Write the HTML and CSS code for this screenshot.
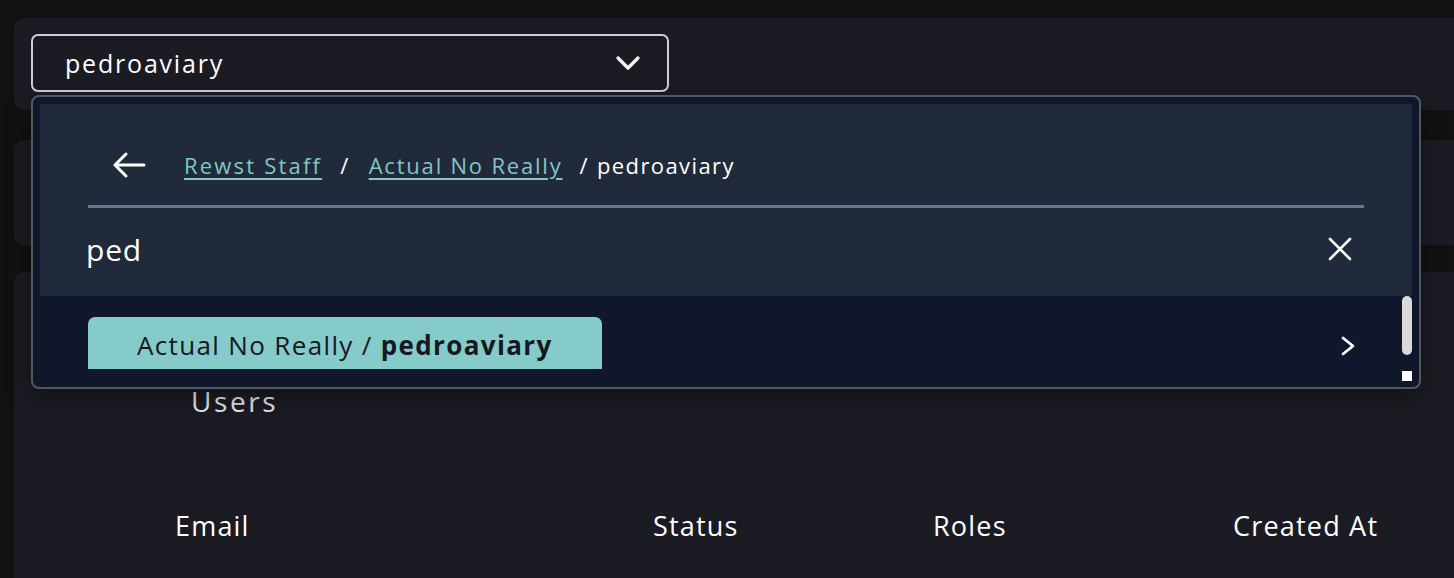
FILE: index.html
```html
<!DOCTYPE html>
<html lang="en">
<head>
<meta charset="utf-8">
<title>Organization picker</title>
<link rel="stylesheet" href="styles.css">
</head>
<body>
<div class="page">
  <section class="card card-top">
    <div class="select">
      <span class="select-value">pedroaviary</span>
      <svg class="select-chevron" width="26" height="16" viewBox="0 0 26 16"><path d="M3 3 L13 13 L23 3" fill="none" stroke="#fff" stroke-width="3.2" stroke-linecap="round" stroke-linejoin="round"/></svg>
    </div>
  </section>
  <section class="card card-mid"></section>
  <section class="card card-main">
    <h2 class="users-title">Users</h2>
    <div class="table-head">
      <span class="th th-email">Email</span>
      <span class="th th-status">Status</span>
      <span class="th th-roles">Roles</span>
      <span class="th th-created">Created At</span>
    </div>
  </section>

  <div class="dropdown">
    <div class="dd-header">
      <div class="crumbs">
        <svg class="back" width="34" height="28" viewBox="0 0 34 28"><path d="M32 14 H3 M14 3 L3 14 L14 25" fill="none" stroke="#fff" stroke-width="3" stroke-linecap="round" stroke-linejoin="round"/></svg>
        <a class="crumb-link crumb-link-wide">Rewst Staff</a>
        <span class="crumb-sep">/</span>
        <a class="crumb-link">Actual No Really</a>
        <span class="crumb-sep crumb-sep-last">/</span>
        <span class="crumb-current">pedroaviary</span>
      </div>
      <div class="divider"></div>
      <div class="search">
        <span class="search-text">ped</span>
        <svg class="clear" width="24" height="24" viewBox="0 0 24 24"><path d="M2 2 L22 22 M22 2 L2 22" fill="none" stroke="#fff" stroke-width="2.6" stroke-linecap="round"/></svg>
      </div>
    </div>
    <div class="dd-body">
      <div class="results">
        <div class="result-row">
          <div class="result-pill">Actual No Really / <b>pedroaviary</b></div>
          <svg class="result-chevron" width="18" height="24" viewBox="0 0 18 24"><path d="M4 4 L14 12 L4 20" fill="none" stroke="#fff" stroke-width="2.8" stroke-linecap="round" stroke-linejoin="round"/></svg>
        </div>
      </div>
      <div class="vbar">
        <div class="thumb"></div>
        <div class="corner"></div>
      </div>
    </div>
  </div>
</div>
</body>
</html>
```

FILE: styles.css
```css
* { box-sizing: border-box; }
html, body { margin: 0; padding: 0; }
body {
  background: #111111;
  width: 1454px;
  height: 578px;
  overflow: hidden;
  font-family: "Open Sans", "Noto Sans", sans-serif;
  color: #ffffff;
}
.page {
  position: relative;
  padding: 18px 0 0 14px;
  display: flex;
  flex-direction: column;
}
.card {
  width: 1460px;
  background: #1b1b23;
  border-radius: 10px;
}
.card-top {
  height: 92px;
  padding: 16px 0 0 17px;
}
.card-mid {
  height: 105px;
  margin-top: 30px;
}
.card-main {
  margin-top: 27px;
  height: 320px;
  padding-top: 112px;
}
.select {
  width: 638px;
  height: 58px;
  border: 2px solid #ccd0da;
  border-radius: 7px;
  display: flex;
  align-items: center;
  justify-content: space-between;
  padding: 0 26px 0 32px;
}
.select-value {
  font-size: 25px;
  letter-spacing: 1.8px;
}
.select-chevron { display: block; }

.users-title {
  margin: 0 0 0 177px;
  font-size: 28px;
  font-weight: 400;
  color: #e4e4e6;
  line-height: 35px;
  letter-spacing: 2.6px;
}
.table-head {
  margin-top: 92px;
  display: grid;
  grid-template-columns: 478px 280px 300px 1fr;
  padding-left: 161px;
  font-size: 27px;
  line-height: 30px;
  letter-spacing: 1.2px;
}

.dropdown {
  position: absolute;
  left: 31px;
  top: 95px;
  width: 1390px;
  height: 294px;
  background: #11172a;
  border: 2px solid #54575f;
  border-radius: 8px;
  padding: 7px 7px 6px 7px;
  box-shadow: 0 8px 24px rgba(0, 0, 0, 0.35);
  display: flex;
  flex-direction: column;
}
.dd-header {
  height: 192px;
  background: #212a3b;
  padding: 40px 48px 0 48px;
  flex: none;
}
.crumbs {
  height: 42px;
  display: flex;
  align-items: center;
  padding-left: 24px;
  font-size: 22px;
  letter-spacing: 1.4px;
}
.back { margin-right: 38px; display: block; }
.crumb-link {
  color: #80c8c6;
  text-decoration: underline;
  text-underline-offset: 4px;
  text-decoration-thickness: 2px;
  letter-spacing: 1.8px;
}
.crumb-link-wide { letter-spacing: 2.2px; }
.crumb-sep { margin: 0 19px 0 18px; color: #fff; }
.crumb-sep-last { margin: 0 8px 0 17px; }
.crumb-current { color: #fff; }
.divider {
  margin-top: 19px;
  height: 3px;
  background: #6a768e;
}
.search {
  height: 82px;
  display: flex;
  align-items: center;
  justify-content: space-between;
  padding: 0 12px 0 0;
  margin-left: -2px;
}
.search-text {
  font-size: 30px;
  letter-spacing: 0.8px;
}
.clear { display: block; }

.dd-body {
  flex: 1;
  display: grid;
  grid-template-columns: 1fr 10px;
}
.results {
  height: 73px;
  overflow: hidden;
  padding: 21px 0 0 48px;
}
.result-row {
  display: flex;
  align-items: flex-start;
  justify-content: space-between;
  padding-right: 45px;
}
.result-pill {
  width: 514px;
  height: 60px;
  background: #84cbca;
  color: #15181f;
  border-radius: 7px;
  padding: 10px 0 0 49px;
  font-size: 26px;
  line-height: 36px;
  letter-spacing: 1.35px;
}
.result-pill b { font-weight: 700; }
.result-chevron { display: block; margin-top: 17px; }
.vbar {
  display: flex;
  flex-direction: column;
  justify-content: space-between;
}
.thumb {
  height: 59px;
  background: #dadada;
  border-radius: 5px;
}
.corner {
  height: 10px;
  background: #ffffff;
}
```
